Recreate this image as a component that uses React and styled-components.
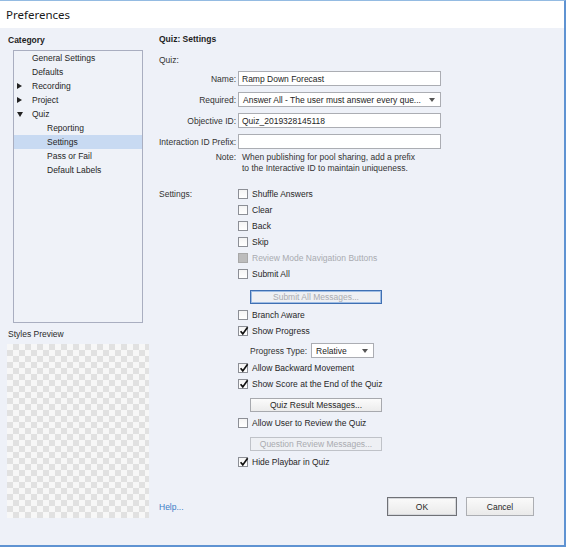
import React from 'react';
import styled, { createGlobalStyle } from 'styled-components';

const Global = createGlobalStyle`
    html, body {
        margin: 0;
        padding: 0;
        background: #ffffff;
    }
    body {
        font-family: 'Liberation Sans', Arial, sans-serif;
        font-size: 8.5px;
        color: #262626;
    }
`;

const Window = styled.div`
    box-sizing: border-box;
    width: 566px;
    height: 547px;
    display: flex;
    flex-direction: column;
    border-top: 1px solid #94bbe2;
    border-right: 2px solid #5f93d2;
    border-bottom: 2px solid #5f93d2;
    background: #eef1f8;
`;

const TitleBar = styled.div`
    height: 27px;
    flex: none;
    display: flex;
    align-items: center;
    padding-left: 6px;
    background: #ffffff;
    font-family: 'Noto Sans', 'Open Sans', sans-serif;
    font-size: 11.5px;
    color: #1a1a1a;
`;

const Body = styled.div`
    flex: 1;
    display: flex;
    min-height: 0;
`;

const Sidebar = styled.div`
    width: 150px;
    flex: none;
    display: flex;
    flex-direction: column;
`;

const Heading = styled.div`
    font-weight: bold;
    line-height: 12px;
    margin-left: ${p => p.$indent || 0}px;
    margin-top: ${p => p.$top || 0}px;
    color: #1e1e1e;
`;

const Tree = styled.div`
    box-sizing: border-box;
    margin: 4px 0 0 13px;
    width: 130px;
    height: 273px;
    border: 1px solid #a9aec0;
    background: #eff2f8;
`;

const TreeRow = styled.div`
    position: relative;
    height: 14px;
    line-height: 14px;
    padding-left: ${p => (p.$child ? 33 : 18)}px;
    background: ${p => (p.$selected ? '#c8daf2' : 'transparent')};
    color: #262626;
`;

const Arrow = styled.span`
    position: absolute;
    left: 3px;
    top: 4px;
    width: 0;
    height: 0;
    ${p => p.$open
        ? `border-left: 3px solid transparent;
           border-right: 3px solid transparent;
           border-top: 5px solid #222;
           top: 5px;`
        : `border-top: 3px solid transparent;
           border-bottom: 3px solid transparent;
           border-left: 5px solid #222;`}
`;

const PreviewLabel = styled.div`
    margin: 5px 0 0 8px;
    line-height: 12px;
    color: #2a2a2a;
`;

const Checker = styled.div`
    margin: 4px 0 0 7px;
    width: 142px;
    height: 174px;
    background: repeating-conic-gradient(#e1e1e1 0 25%, #f7f7f7 0 50%) 0 0 / 12px 12px;
`;

const Main = styled.div`
    flex: 1;
    display: flex;
    flex-direction: column;
    padding: 5px 30px 29px 9px;
`;

const GroupLabel = styled.div`
    margin-top: 9px;
    line-height: 12px;
    color: #333;
`;

const FieldGrid = styled.div`
    display: grid;
    grid-template-columns: 78px 204px;
    row-gap: 6px;
    margin-top: 5px;
    align-items: center;
`;

const FieldLabel = styled.div`
    text-align: ${p => (p.$left ? 'left' : 'right')};
    padding-right: 1px;
    color: #333;
    white-space: nowrap;
    line-height: ${p => (p.$line ? `${p.$line}px` : 'normal')};
    align-self: ${p => (p.$top ? 'start' : 'center')};
`;

const TextBox = styled.div`
    box-sizing: border-box;
    height: 15px;
    margin-left: 1px;
    display: flex;
    align-items: center;
    padding: 0 3px;
    background: #ffffff;
    border: 1px solid #abadb3;
    color: #1e1e1e;
    white-space: nowrap;
    overflow: hidden;
`;

const SelectBox = styled(TextBox)`
    justify-content: space-between;
    padding: 0 5px 0 4px;
    width: ${p => (p.$width ? `${p.$width}px` : 'auto')};
`;

const Caret = styled.span`
    width: 0;
    height: 0;
    border-left: 3px solid transparent;
    border-right: 3px solid transparent;
    border-top: 4px solid #555;
    flex: none;
`;

const Note = styled.div`
    grid-column: 2;
    line-height: 11px;
    padding-left: 5px;
    color: #333;
    margin-top: -3px;
`;

const NoteLabel = styled(FieldLabel)`
    align-self: start;
    line-height: 11px;
    margin-top: -3px;
`;

const SettingsGrid = styled.div`
    display: grid;
    grid-template-columns: 79px 1fr;
    margin-top: 12px;
`;

const Options = styled.div`
    display: flex;
    flex-direction: column;
`;

const CheckRow = styled.div`
    display: flex;
    align-items: center;
    gap: 4px;
    height: 16px;
    margin-top: ${p => p.$top || 0}px;
    color: ${p => (p.$disabled ? '#a9abb0' : '#262626')};
`;

const Box = styled.span`
    box-sizing: border-box;
    width: 10px;
    height: 10px;
    flex: none;
    position: relative;
    border: 1px solid ${p => (p.$disabled ? '#a8a8a8' : '#8c8f96')};
    background: ${p => (p.$disabled ? '#bcbcbc' : 'linear-gradient(#f4f4f4, #ffffff)')};

    svg {
        position: absolute;
        left: -1px;
        top: -2px;
    }
`;

const SmallButton = styled.div`
    box-sizing: border-box;
    margin: ${p => p.$top || 0}px 0 0 12px;
    width: 132px;
    height: 14px;
    display: flex;
    align-items: center;
    justify-content: center;
    background: ${p => (p.$disabled ? '#eef0f4' : 'linear-gradient(#fbfbfb, #ececec)')};
    border: 1px solid ${p => (p.$focus ? '#3f70b3' : p.$disabled ? '#bfc2c8' : '#a7a9ae')};
    box-shadow: ${p => (p.$focus ? 'inset 0 0 0 1px #9fbde4' : 'none')};
    color: ${p => (p.$disabled ? '#a9abb0' : '#262626')};
`;

const InlineRow = styled.div`
    display: flex;
    align-items: center;
    height: 17px;
    margin: 3px 0 0 12px;
    gap: 3px;
    color: #333;
`;

const Footer = styled.div`
    margin-top: auto;
    display: flex;
    align-items: center;
`;

const HelpLink = styled.a`
    color: #3b7cc6;
    text-decoration: none;
    margin-right: auto;
`;

const DialogButton = styled.div`
    box-sizing: border-box;
    width: ${p => p.$width}px;
    height: 19px;
    margin-left: 9px;
    display: flex;
    align-items: center;
    justify-content: center;
    background: linear-gradient(#fafafa, #eaeaea);
    border: 1px solid ${p => (p.$primary ? '#6f7176' : '#acaeb3')};
    box-shadow: ${p => (p.$primary ? 'inset 0 0 0 1px #d6d8dc' : 'none')};
    color: #262626;
`;

const Tick = () => (
    <svg width="12" height="12" viewBox="0 0 12 12">
        <path d="M2.6 6.2 L4.8 8.9 L9.6 2.2" fill="none" stroke="#111" strokeWidth="1.7" />
    </svg>
);

const Check = ({ label, checked, disabled, top }) => (
    <CheckRow $top={top} $disabled={disabled}>
        <Box $disabled={disabled}>{checked && <Tick />}</Box>
        {label}
    </CheckRow>
);

const treeItems = [
    { label: 'General Settings' },
    { label: 'Defaults' },
    { label: 'Recording', arrow: 'closed' },
    { label: 'Project', arrow: 'closed' },
    { label: 'Quiz', arrow: 'open' },
    { label: 'Reporting', child: true },
    { label: 'Settings', child: true, selected: true },
    { label: 'Pass or Fail', child: true },
    { label: 'Default Labels', child: true },
];

export default function App() {
    return (
        <>
            <Global />
            <Window>
                <TitleBar>Preferences</TitleBar>
                <Body>
                    <Sidebar>
                        <Heading $indent={8} $top={6}>Category</Heading>
                        <Tree>
                            {treeItems.map(item => (
                                <TreeRow key={item.label} $child={item.child} $selected={item.selected}>
                                    {item.arrow && <Arrow $open={item.arrow === 'open'} />}
                                    {item.label}
                                </TreeRow>
                            ))}
                        </Tree>
                        <PreviewLabel>Styles Preview</PreviewLabel>
                        <Checker />
                    </Sidebar>
                    <Main>
                        <Heading>Quiz: Settings</Heading>
                        <GroupLabel>Quiz:</GroupLabel>
                        <FieldGrid>
                            <FieldLabel>Name:</FieldLabel>
                            <TextBox>Ramp Down Forecast</TextBox>
                            <FieldLabel>Required:</FieldLabel>
                            <SelectBox>
                                <span>Answer All - The user must answer every que...</span>
                                <Caret />
                            </SelectBox>
                            <FieldLabel>Objective ID:</FieldLabel>
                            <TextBox>Quiz_2019328145118</TextBox>
                            <FieldLabel>Interaction ID Prefix:</FieldLabel>
                            <TextBox />
                            <NoteLabel>Note:</NoteLabel>
                            <Note>
                                When publishing for pool sharing, add a prefix<br />
                                to the Interactive ID to maintain uniqueness.
                            </Note>
                        </FieldGrid>
                        <SettingsGrid>
                            <FieldLabel $left $top $line={16}>Settings:</FieldLabel>
                            <Options>
                                <Check label="Shuffle Answers" />
                                <Check label="Clear" />
                                <Check label="Back" />
                                <Check label="Skip" />
                                <Check label="Review Mode Navigation Buttons" disabled />
                                <Check label="Submit All" />
                                <SmallButton $top={8} $disabled $focus>Submit All Messages...</SmallButton>
                                <Check label="Branch Aware" top={3} />
                                <Check label="Show Progress" checked />
                                <InlineRow>
                                    Progress Type:
                                    <SelectBox $width={63}>
                                        <span>Relative</span>
                                        <Caret />
                                    </SelectBox>
                                </InlineRow>
                                <Check label="Allow Backward Movement" checked top={1} />
                                <Check label="Show Score at the End of the Quiz" checked />
                                <SmallButton $top={6}>Quiz Result Messages...</SmallButton>
                                <Check label="Allow User to Review the Quiz" top={3} />
                                <SmallButton $top={6} $disabled>Question Review Messages...</SmallButton>
                                <Check label="Hide Playbar in Quiz" checked top={3} />
                            </Options>
                        </SettingsGrid>
                        <Footer>
                            <HelpLink href="#">Help...</HelpLink>
                            <DialogButton $width={70} $primary>OK</DialogButton>
                            <DialogButton $width={68}>Cancel</DialogButton>
                        </Footer>
                    </Main>
                </Body>
            </Window>
        </>
    );
}
